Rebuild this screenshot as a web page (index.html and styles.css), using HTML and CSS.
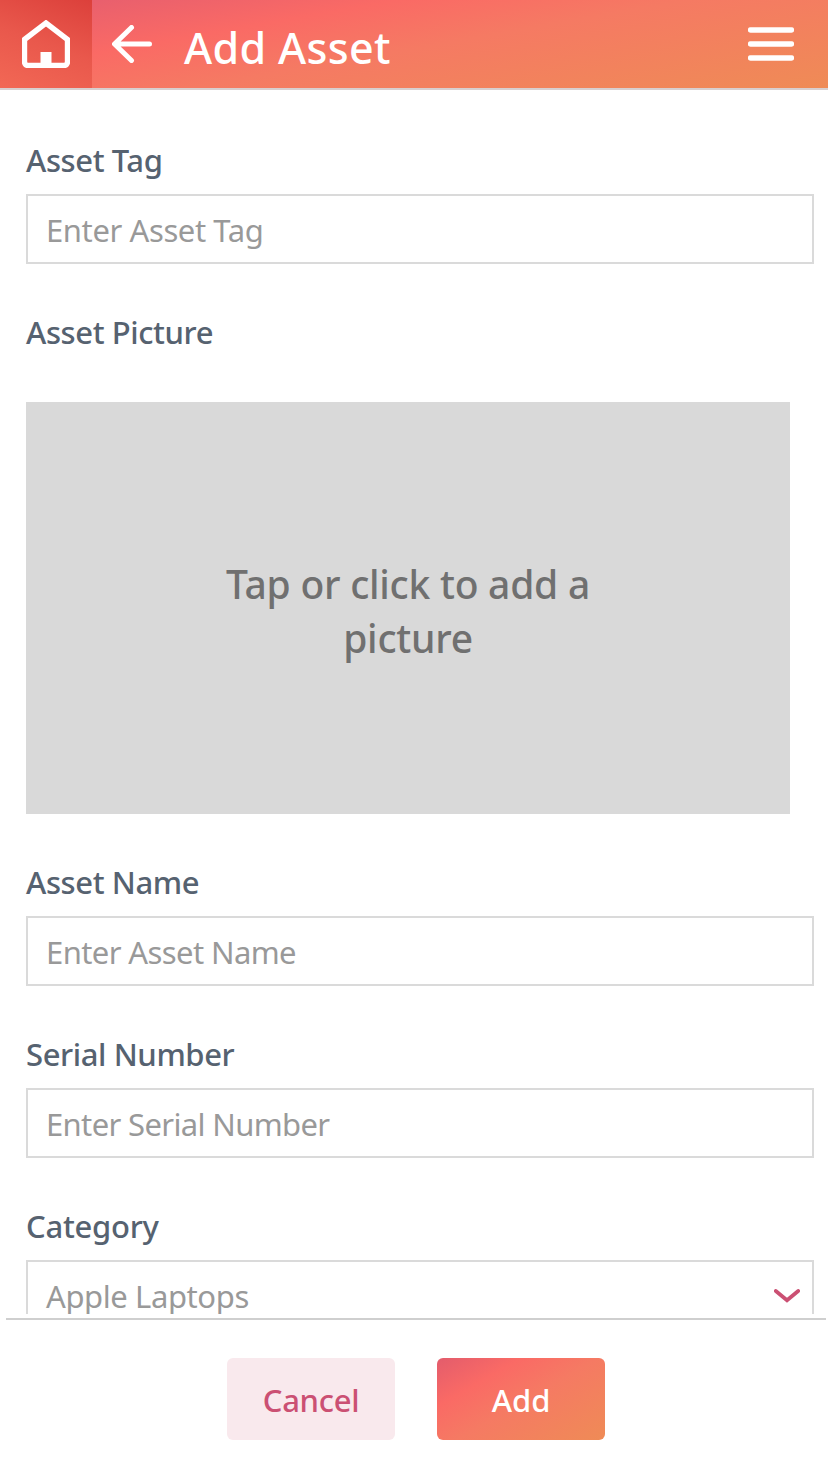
FILE: index.html
```html
<!DOCTYPE html>
<html lang="en">
<head>
<meta charset="utf-8">
<title>Add Asset</title>
<link rel="stylesheet" href="styles.css">
</head>
<body>
<div class="app">
  <header class="topbar">
    <a class="home" aria-label="Home">
      <svg width="48" height="48" viewBox="0 0 48 48"><path d="M2.5 19.5 24 3l21.500 16.500V42a3.500 3.500 0 0 1-3.500 3.500H6A3.500 3.500 0 0 1 2.500 42Z" fill="none" stroke="#fff" stroke-width="5.400"/><path d="M18.500 32h11v14h-11z" fill="#fff"/></svg>
    </a>
    <svg class="back" width="40" height="38" viewBox="0 0 40 38"><path d="M19.500 2.500 2.500 19l17 16.500M3 19h34.500" fill="none" stroke="#fff" stroke-width="5" stroke-linecap="round" stroke-linejoin="round"/></svg>
    <h1 class="title"><span>Add Asset</span></h1>
    <svg class="menu" width="46" height="34" viewBox="0 0 46 34"><path d="M2.500 3h41M2.500 17h41M2.500 31h41" stroke="#fff" stroke-width="5.400" stroke-linecap="round"/></svg>
  </header>
  <main class="form">
    <section class="field">
      <div class="label"><span class="l-tag">Asset Tag</span></div>
      <div class="input"><span class="p-tag">Enter Asset Tag</span></div>
    </section>
    <section class="field picture-field">
      <div class="label"><span class="l-picture">Asset Picture</span></div>
      <div class="picture"><span>Tap or click to add a<br>picture</span></div>
    </section>
    <section class="field">
      <div class="label"><span class="l-name">Asset Name</span></div>
      <div class="input"><span class="p-name">Enter Asset Name</span></div>
    </section>
    <section class="field">
      <div class="label"><span class="l-serial">Serial Number</span></div>
      <div class="input"><span class="p-serial">Enter Serial Number</span></div>
    </section>
    <section class="field">
      <div class="label"><span class="l-category">Category</span></div>
      <div class="input select"><span class="p-category">Apple Laptops</span>
        <svg class="chevron" width="26" height="14" viewBox="0 0 26 14"><path d="M1.800 2 13 11.200 24.200 2" fill="none" stroke="#cb5073" stroke-width="3.800" stroke-linecap="round"/></svg>
      </div>
    </section>
  </main>
  <footer class="actions">
    <div class="button cancel"><span>Cancel</span></div>
    <div class="button add"><span>Add</span></div>
  </footer>
</div>
</body>
</html>
```
FILE: styles.css
```css
* { box-sizing: border-box; }
body { margin: 0; background: #fff; font-family: "Noto Sans", "Open Sans", sans-serif; }
.app { width: 828px; height: 1472px; display: flex; flex-direction: column; overflow: hidden; }
.topbar {
  flex: none; height: 90px; display: flex; align-items: center;
  border-bottom: 2px solid #d8cfcf;
  background: linear-gradient(170deg, #e35c70 0%, #fa6a65 30%, #f57a63 52%, #ef8b56 100%) padding-box;
}
.home {
  width: 92px; height: 88px; display: flex; align-items: center; justify-content: center;
  background: linear-gradient(20deg, #f26855 0%, #e9584c 50%, #dc403b 100%);
}
.back { margin-left: 20px; }
.title { margin: 7px 0 0 32px; font-size: 43px; line-height: 60px; font-weight: 500; letter-spacing: 0.35px; color: #fff; white-space: nowrap; }
.menu { margin-left: auto; margin-right: 34px; }
.form { flex: none; height: 1224px; padding: 51px 14px 0 26px; overflow: hidden; }
.field { margin-bottom: 50px; }
.label { height: 53px; font-size: 31px; line-height: 38px; font-weight: 500; color: #566270; white-space: nowrap; }
.field + .field { margin-top: -1px; }
.l-tag, .l-picture, .l-name, .l-serial { letter-spacing: -0.4px; }
.l-category { letter-spacing: -0.25px; }
.input { height: 70px; border: 2px solid #dadada; padding: 3px 12px 0 18px; font-size: 31px; line-height: 62px; color: #999; white-space: nowrap; }
.p-tag, .p-category { letter-spacing: -0.4px; }
.p-name { letter-spacing: -0.6px; }
.p-serial { letter-spacing: -0.65px; }
.select { display: flex; justify-content: space-between; }
.chevron { margin-top: 24px; }
.picture-field .label { height: 89px; }
.picture {
  width: 764px; height: 412px; display: flex; align-items: center; justify-content: center; text-align: center;
  background: #d9d9d9; color: #707070; font-size: 39px; line-height: 54px; font-weight: 500; padding-top: 5px;
  letter-spacing: -0.25px;
}
.actions { flex: none; height: 154px; margin: 4px 2px 0 6px; border-top: 2px solid #cfcfcf; padding: 38px 0 0 221px; display: flex; gap: 42px; }
.button { width: 168px; height: 82px; border-radius: 6px; display: flex; align-items: center; justify-content: center; font-size: 31px; font-weight: 500; padding-top: 2px; }
.cancel { background: #f9e9ed; color: #cb5073; letter-spacing: -0.3px; }
.add { color: #fff; background: linear-gradient(150deg, #e35c6c 0%, #fa6a65 27%, #f57a63 52%, #ef8b56 100%); }
```
